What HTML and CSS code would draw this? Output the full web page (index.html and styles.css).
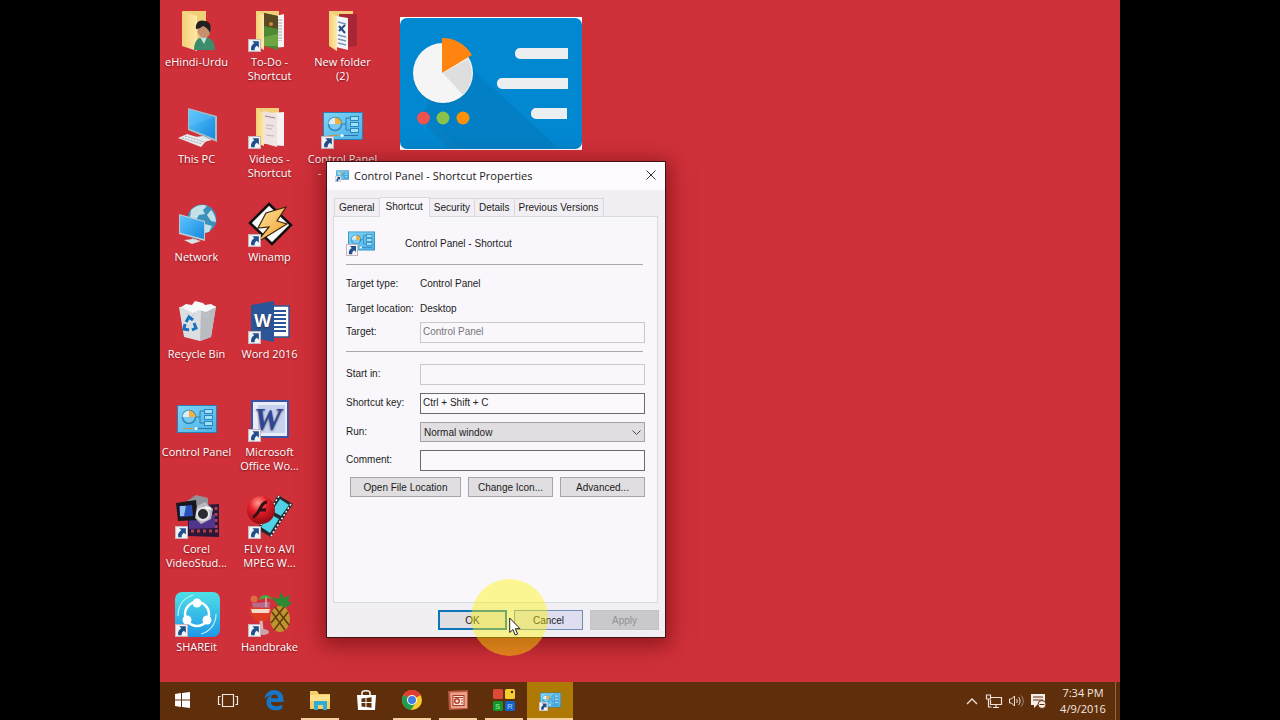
FILE: index.html
```html
<!DOCTYPE html>
<html lang="en">
<head>
<meta charset="utf-8">
<meta name="viewport" content="width=device-width, initial-scale=1">
<title>Control Panel - Shortcut Properties</title>
<link rel="stylesheet" href="styles.css">
</head>
<body>
<svg class="defs" aria-hidden="true">
  <defs>
    <linearGradient id="folderFront" x1="0" y1="0" x2="1" y2="0"><stop offset="0" stop-color="#f3cf74"/><stop offset="1" stop-color="#ffe9a8"/></linearGradient>
    <linearGradient id="screenBlue" x1="0" y1="0" x2="1" y2="1"><stop offset="0" stop-color="#5cc6fb"/><stop offset="1" stop-color="#1689e0"/></linearGradient>
    <linearGradient id="panelBlue" x1="0" y1="0" x2="1" y2="1"><stop offset="0" stop-color="#7fd3f7"/><stop offset="1" stop-color="#4cb2e6"/></linearGradient>
    <linearGradient id="shareBlue" x1="0" y1="0" x2="0" y2="1"><stop offset="0" stop-color="#4fe0e6"/><stop offset="1" stop-color="#1f97e8"/></linearGradient>
    <linearGradient id="bolt" x1="0" y1="0" x2="1" y2="1"><stop offset="0" stop-color="#ffe7a0"/><stop offset="1" stop-color="#f09a28"/></linearGradient>
    <radialGradient id="flash" cx=".4" cy=".25" r=".8"><stop offset="0" stop-color="#ff9a90"/><stop offset=".4" stop-color="#e5202a"/><stop offset="1" stop-color="#8c0610"/></radialGradient>
    <symbol id="arrow" viewBox="0 0 12 12">
      <rect width="12" height="12" fill="#f4f4f6"/><rect x=".5" y=".5" width="11" height="11" fill="none" stroke="#c9b5bb"/>
      <path d="M4 2h6v6L8.200 6.200C6.500 7.300 6 8.500 6.200 10.300H3C2.300 7.600 3.300 5.500 5.800 3.900z" fill="#1f4f8c"/>
    </symbol>
    <symbol id="cpanel" viewBox="0 0 40 28">
      <rect width="40" height="28" fill="#2a7fb5"/><rect x="1" y="1" width="38" height="26" fill="url(#panelBlue)"/>
      <circle cx="12" cy="12" r="6.500" fill="#7cc8ee" stroke="#2f86ba" stroke-width="1.500"/><path d="M12 12V5.500A6.500 6.500 0 0 1 18.500 12z" fill="#f3b13c"/><path d="M12 12V5.500A6.500 6.500 0 0 0 5.500 12z" fill="#d8effa"/>
      <path d="M19 12h4V6h4M23 12v6h4" fill="none" stroke="#2b7db0"/>
      <g fill="#9fe0fa" stroke="#2b86bb"><rect x="27.500" y="4.500" width="8" height="4"/><rect x="27.500" y="10.500" width="8" height="4"/><rect x="27.500" y="16.500" width="8" height="4"/></g>
      <path d="M6 23.500h10" stroke="#c29a45"/><path d="M21 23.500h14" stroke="#2878b0"/><circle cx="19" cy="23.500" r="1.500" fill="#fff"/>
    </symbol>
  </defs>
</svg>

<main class="screen">
  <section class="desktop">
    <div class="icons">
      <button class="icon"><svg viewBox="0 0 48 48"><path d="M10 4h23v35H10z" fill="#f0cf78"/><path d="M9 4l15 5v35L9 39z" fill="url(#folderFront)"/><path d="M21 43c0-9 4-13 10-13 7 0 11 5 11 13z" fill="#3c8d6b"/><path d="M27 30l4 7 3-7z" fill="#c9e4dc"/><ellipse cx="31" cy="23" rx="6.500" ry="8" fill="#c79170"/><path d="M23 22c-1-7 4-10 9-8 5 0 7 5 5 12-2-4-4-6-7-7-2 2-5 3-7 3z" fill="#222122"/></svg><span>eHindi-Urdu</span></button>
      <button class="icon"><svg viewBox="0 0 48 48"><path d="M10 4h23v35H10z" fill="#f0cf78"/><path d="M25 10l13-3v33l-13 1z" fill="#f5f3f2"/><path d="M33 12v22M35 12v22" stroke="#a9a6a8" stroke-dasharray="2 1"/><path d="M18 6l14 3v34l-14-4z" fill="#4d8a33"/><path d="M18 6l14 3v13l-14-3z" fill="#5a4a24"/><circle cx="25" cy="17" r="2" fill="#c88a3c"/><path d="M18 30l14-3v12l-14 0z" fill="#6fa444"/><path d="M10 4l8 4v35l-8-4z" fill="url(#folderFront)"/><use href="#arrow" x="2" y="32" width="13" height="13"/></svg><span>To-Do -<br>Shortcut</span></button>
      <button class="icon"><svg viewBox="0 0 48 48"><path d="M10 4h24v35H10z" fill="#f0cf78"/><path d="M20 7l18 0v32l-18 2z" fill="#a92735"/><path d="M17 9l12 2v32l-12-3z" fill="#f5f5f8"/><path d="M19 15l8 2M19 28l8 2M19 32l8 2M19 36l8 2" stroke="#7993ba" stroke-width="1.500"/><path d="M20 24l6-6M20 19l6 7" stroke="#264b83" stroke-width="2"/><path d="M10 4l8 6v34l-8-5z" fill="url(#folderFront)"/></svg><span>New folder<br>(2)</span></button>

      <button class="icon"><svg viewBox="0 0 48 48"><path d="M15 4l29 8v26L15 26z" fill="#a9bcc8"/><path d="M16 5.500l26 7.500v22L16 24.500z" fill="url(#screenBlue)"/><path d="M16 5.500l26 7.500-26 10z" fill="#6bcfff" opacity=".25"/><path d="M29 31l6 2v3l-7-2z" fill="#9aa8b0"/><path d="M22 33l8-1 9 4-8 2z" fill="#dfe5e8"/><path d="M5 34l9-4 20 6-6 7z" fill="#e8e9ec"/><path d="M9 34l20 6M12 32l19 6" stroke="#a8afb8" stroke-dasharray="2 1"/></svg><span>This PC</span></button>
      <button class="icon"><svg viewBox="0 0 48 48"><path d="M10 4h23v36H10z" fill="#f0cf78"/><path d="M24 9l14-1v34l-14-1z" fill="#f7f3f3"/><path d="M17 7l14 3v33l-14-4z" fill="#eee2e2"/><path d="M19 12l10 2" stroke="#a07a85"/><path d="M20 21l8 1M20 24l6 1M20 31l8 1" stroke="#c8b4bb"/><path d="M10 4l8 6v32l-8-3z" fill="url(#folderFront)"/><use href="#arrow" x="2" y="32" width="13" height="13"/></svg><span>Videos -<br>Shortcut</span></button>
      <button class="icon"><svg viewBox="0 0 48 48"><use href="#cpanel" x="4" y="8" width="40" height="28"/><use href="#arrow" x="2" y="32" width="13" height="13"/></svg><span>Control Panel</span><span class="rest">-</span></button>

      <button class="icon"><svg viewBox="0 0 48 48"><circle cx="29" cy="17" r="14.500" fill="#3b91bd"/><path d="M18 8c5-5 12-6 16-4l-4 4 2 4-6 1-3 5-6-3zM38 8c3 3 5 8 5 12l-5-1-4-6zM32 22l7 2-3 6-5 1z" fill="#c4e1e8"/><path d="M6 12l26 7v20L6 32z" fill="#bacbd5"/><path d="M7 13.500l24 6.500v17L7 30.500z" fill="url(#screenBlue)"/><path d="M19 36l5 1v2l-6-1z" fill="#8fa2ad"/><path d="M11 38l9-1 8 2-9 3z" fill="#d9e2e6"/></svg><span>Network</span></button>
      <button class="icon"><svg viewBox="0 0 48 48"><path d="M23 2L45 23 26 42 4 21z" fill="#fafafa" stroke="#111" stroke-width="2.500"/><path d="M40 5L20 11l-8 15 11-1-13 16 31-19-10-3z" fill="url(#bolt)" stroke="#3a2408" stroke-width="1.200"/><use href="#arrow" x="2" y="32" width="13" height="13"/></svg><span>Winamp</span></button>
      <i></i>

      <button class="icon"><svg viewBox="0 0 48 48"><path d="M6 8l37-1-5 31-11 4-16-4z" fill="#dcdfe2"/><path d="M28 9l15-2-5 31-11 4z" fill="#b9bdc2"/><path d="M8 8l5-3 6 1 3-4 8 2 2 2 6-1 5 3-10 5-7-2-6 3z" fill="#f7f8f9"/><path d="M14 14l3 5 5-5M29 14l5 4 3-5" stroke="#c3c7ca" fill="none"/><g fill="none" stroke="#1672bd" stroke-width="3"><path d="M13 23l3-5 4 3"/><path d="M21 24l2 5-4 2"/><path d="M16 31l-5-1 1-5"/></g></svg><span>Recycle Bin</span></button>
      <button class="icon"><svg viewBox="0 0 48 48"><path d="M25 7h18v31H25z" fill="#fff" stroke="#2a5699" stroke-width="1.500"/><path d="M28 12h12M28 16h12M28 20h12M28 24h12M28 28h12M28 32h12" stroke="#2a5699" stroke-width="2"/><path d="M5 6l23-4v41L5 38z" fill="#2a5699"/><text x="8" y="28" class="word-letter">W</text><use href="#arrow" x="2" y="32" width="13" height="13"/></svg><span>Word 2016</span></button>
      <i></i>

      <button class="icon"><svg viewBox="0 0 48 48"><use href="#cpanel" x="4" y="8" width="40" height="28"/></svg><span>Control Panel</span></button>
      <button class="icon"><svg viewBox="0 0 48 48"><rect x="6" y="4" width="36" height="36" fill="#e9edf8" stroke="#3a55a4" stroke-width="2"/><path d="M12 8h27v28H12z" fill="#c7d2ef"/><text x="8" y="33" class="office-letter">W</text><use href="#arrow" x="2" y="32" width="13" height="13"/></svg><span>Microsoft<br>Office Wo...</span></button>
      <i></i>

      <button class="icon"><svg viewBox="0 0 48 48"><path d="M15 12l31-2v33l-31-1z" fill="#2b1838"/><path d="M18 37h27M43 13v24" stroke="#b0414a" stroke-width="3" stroke-dasharray="3 3"/><path d="M16 26l26-6v14l-26 1z" fill="#51348c"/><path d="M14 7l9-6 12 3v7l-12 1z" fill="#929299"/><path d="M3 9l20-3 2 20-20 1z" fill="#17171c"/><path d="M6 12l13-1 1 11-13 1z" fill="#294fba"/><path d="M7 12l6 0-2 10H7z" fill="#94bdf1"/><path d="M24 12l8-4 8 7-2 10-10 5-6-6z" fill="#bbb9c0"/><circle cx="30" cy="20" r="6" fill="#2c2b33" stroke="#e6e5e8" stroke-width="2"/><path d="M32 13l6 2" stroke="#fff" stroke-width="2"/><use href="#arrow" x="2" y="32" width="13" height="13"/></svg><span>Corel<br>VideoStud...</span></button>
      <button class="icon"><svg viewBox="0 0 48 48"><path d="M32 1l15 9-22 33-14-8z" fill="#222a30"/><path d="M34 5l9 6-8 11-9-5zM24 20l9 5-9 14-9-6z" fill="#4fd2e5"/><path d="M33 2L13 34M45 10L25 42" stroke="#f0f0f0" stroke-width="1.500" stroke-dasharray="2 2"/><circle cx="15" cy="16" r="14" fill="url(#flash)"/><path d="M21 8c-7 0-7 13-14 15M12 16h8" fill="none" stroke="#321114" stroke-width="3"/><use href="#arrow" x="2" y="32" width="13" height="13"/></svg><span>FLV to AVI<br>MPEG W...</span></button>
      <i></i>

      <button class="icon"><svg viewBox="0 0 48 48"><rect x="2" y="0" width="45" height="45" rx="7" fill="url(#shareBlue)"/><circle cx="24" cy="22" r="12" fill="none" stroke="#fff" stroke-width="2.500"/><circle cx="24" cy="11" r="4.500" fill="#fff"/><circle cx="14" cy="28" r="4.500" fill="#fff"/><circle cx="34" cy="28" r="4.500" fill="#fff"/><path d="M5 24C5 13 11 6 20 3M43 22c0 11-7 18-15 20" fill="none" stroke="#b9f2f7" stroke-width="1.200"/><use href="#arrow" x="2" y="32" width="13" height="13"/></svg><span>SHAREit</span></button>
      <button class="icon"><svg viewBox="0 0 48 48"><path d="M35 16L25 5l8 2 2-7 3 6 6-3-2 6 4 2-8 6z" fill="#2c8a31"/><ellipse cx="34" cy="27" rx="10" ry="13" fill="#c0932f"/><path d="M26 20l13 18M29 15l14 18M42 20L28 38M38 15L25 31" stroke="#5c3d0b" stroke-width="1.500"/><path d="M6 11l18-1-1 7H7z" fill="#b76c8f"/><path d="M3 15l22 1c0 8-4 14-10 14S4 24 3 15z" fill="#df3d23"/><path d="M5 17h19l-1 4H6z" fill="#f5dcca"/><path d="M15 29l1 9" stroke="#ddb5bd" stroke-width="3"/><ellipse cx="17" cy="40" rx="6" ry="3" fill="#c9a3ab"/><path d="M13 8c1-6 9-7 13-1l-6-1z" fill="#45a83c"/><path d="M20 5v10" stroke="#eadccc"/><circle cx="8" cy="7" r="3.500" fill="#e06a45"/><use href="#arrow" x="2" y="32" width="13" height="13"/></svg><span>Handbrake</span></button>
    </div>

    <svg class="preview" viewBox="0 0 182 133" role="img" aria-label="Control Panel">
      <rect width="182" height="133" fill="#fff"/><rect y="1" width="182" height="131" rx="7" fill="#0288d1"/>
      <path d="M67 47l91 84H60L21 96z" fill="#027fc5"/><path d="M21 96l40 35H49L17 101z" fill="#0780c5"/>
      <circle cx="43" cy="58" r="30" fill="#0277b5" opacity=".5"/>
      <circle cx="43" cy="56" r="30" fill="#f5f5f5"/><path d="M43 56l25-14a30 30 0 0 1-5 36z" fill="#dedede"/><path d="M42 21a34 34 0 0 1 30 17L42 56z" fill="#ff8410"/>
      <path d="M168 31h-48a5 5 0 0 0-5 5v1a5 5 0 0 0 5 5h48zM168 61h-66a5 5 0 0 0-5 5v1a5 5 0 0 0 5 5h66zM167 91h-31a5 5 0 0 0-5 5v1a5 5 0 0 0 5 5h31z" fill="#eceff1"/>
      <circle cx="23.500" cy="101" r="6.500" fill="#ef5350"/><circle cx="43" cy="101" r="6.500" fill="#8bc34a"/><circle cx="63" cy="101" r="6.500" fill="#ff9108"/>
    </svg>

    <section class="dialog" role="dialog" aria-labelledby="dialog-title">
      <header class="titlebar">
        <svg class="title-icon" viewBox="0 0 14 13"><use href="#cpanel" x="1" y="1" width="13" height="10"/><use href="#arrow" y="7" width="6" height="6"/></svg>
        <h1 id="dialog-title">Control Panel - Shortcut Properties</h1>
        <button class="close" aria-label="Close"><svg viewBox="0 0 10 10"><path d="M.5.500l9 9M9.500.500l-9 9" stroke="#333" fill="none"/></svg></button>
      </header>
      <div class="tabs" role="tablist">
        <button role="tab">General</button><button role="tab" class="selected" aria-selected="true">Shortcut</button><button role="tab">Security</button><button role="tab">Details</button><button role="tab">Previous Versions</button>
      </div>
      <form class="panel" role="tabpanel">
        <div class="summary"><svg viewBox="0 0 30 28"><use href="#cpanel" x="2" y="2" width="27" height="20"/><use href="#arrow" y="15" width="12" height="12"/></svg><span>Control Panel - Shortcut</span></div>
        <hr>
        <dl class="facts">
          <dt>Target type:</dt><dd>Control Panel</dd>
          <dt>Target location:</dt><dd>Desktop</dd>
        </dl>
        <div class="field"><label for="target">Target:</label><input id="target" type="text" value="Control Panel" disabled></div>
        <hr class="second">
        <div class="fields">
          <div class="field"><label for="start">Start in:</label><input id="start" type="text" disabled></div>
          <div class="field"><label for="key">Shortcut key:</label><input id="key" type="text" value="Ctrl + Shift + C"></div>
          <div class="field"><label for="run">Run:</label><span class="pick"><select id="run"><option>Normal window</option><option>Minimized</option><option>Maximized</option></select><svg viewBox="0 0 9 5"><path d="M.5.500l4 4 4-4" fill="none" stroke="#444"/></svg></span></div>
          <div class="field"><label for="comment">Comment:</label><input id="comment" type="text"></div>
        </div>
        <div class="actions"><button type="button" class="btn wide">Open File Location</button><button type="button" class="btn">Change Icon...</button><button type="button" class="btn">Advanced...</button></div>
      </form>
      <footer class="footer"><button class="btn default">OK</button><button class="btn hover">Cancel</button><button class="btn" disabled>Apply</button></footer>
    </section>

    <div class="halo"></div>
    <svg class="cursor" viewBox="0 0 12 19"><path d="M.7 1v14.500l3.300-3 2.200 5.500 2.400-1-2.300-5.300h4.700z" fill="#fff" stroke="#222"/></svg>
  </section>

  <nav class="taskbar">
    <div class="apps">
      <button class="app start" aria-label="Start"><svg viewBox="0 0 24 24"><path d="M4 6l6-1v6.500H4zM11 5l8-1v7.500h-8zM4 12.500h6V19l-6-1zM11 12.500h8V20l-8-1z" fill="#fff"/></svg></button>
      <button class="app" aria-label="Task View"><svg viewBox="0 0 24 24"><path d="M6.500 6.500h11v12h-11zM4.500 8.500h-2v8h2M19.500 8.500h2v8h-2" fill="none" stroke="#f0e8e2" stroke-width="1.200"/></svg></button>
      <button class="app" aria-label="Edge"><svg viewBox="0 0 24 24"><path d="M2.500 11C3 5.500 7 2 12.200 2 18 2 21.500 6 21.500 11.200V14H8.800c.2 3 2.500 4.300 5.700 4.300 2.200 0 4-.6 5.700-1.500v4c-2 1-4.200 1.500-6.700 1.500C8 22.300 4.500 19 4.500 14.200c0-3.200 1.700-5.700 4.500-7-3 .6-5.200 1.900-6.500 3.800zM9 10.200h7c0-2.400-1.300-3.700-3.400-3.700-2 0-3.300 1.400-3.600 3.700z" fill="#1675c5"/></svg></button>
      <button class="app open" aria-label="File Explorer"><svg viewBox="0 0 24 24"><path d="M2 3h7l2 3h11v15H2z" fill="#f3cf6c"/><path d="M2 7h20v6H2z" fill="#ffe18c"/><path d="M6 13h13v9h-4v-5h-5v5H6z" fill="#31acd4"/></svg></button>
      <button class="app" aria-label="Store"><svg viewBox="0 0 24 24"><path d="M8 7V4.500C8 2 16 2 16 4.500V7" fill="none" stroke="#fff" stroke-width="1.500"/><path d="M3 7h19l-1 15H4z" fill="#fff"/><path d="M7.500 10.500l4-.5v4h-4zM12.500 10l5-.7V14h-5zM7.500 15h4v4l-4-.5zM12.500 15h5v4.700l-5-.6z" fill="#5f2e0b"/></svg></button>
      <button class="app open" aria-label="Chrome"><svg viewBox="0 0 24 24"><circle cx="12" cy="12" r="10" fill="#f7cb28"/><path d="M12 12L3.300 7A10 10 0 0 1 20.700 7z" fill="#df3e31"/><path d="M3.300 7A10 10 0 0 0 11 22l5-8-4-2z" fill="#219a50"/><path d="M3.300 7A10 10 0 0 1 20.700 7H12z" fill="#df3e31"/><circle cx="12" cy="12" r="5" fill="#fff"/><circle cx="12" cy="12" r="4" fill="#427fe0"/></svg></button>
      <button class="app open" aria-label="PowerPoint"><svg viewBox="0 0 24 24"><path d="M2 3l20-1v19l-19 1z" fill="#bb553e"/><path d="M4 4.500l17-.5v16L5 20.500z" fill="#e7a18d"/><rect x="7" y="7.500" width="11" height="10" fill="#fae2d9" stroke="#a63c27"/><circle cx="11" cy="13" r="2.300" fill="none" stroke="#b34029" stroke-width="1.500"/><path d="M8 9.500h9M15 12h2M15 15h2" stroke="#b34029"/></svg></button>
      <button class="app open" aria-label="Screen Recorder"><svg viewBox="0 0 24 24"><rect x="1" y="1" width="10" height="10" rx="1.500" fill="#dc4939"/><rect x="13" y="1" width="10" height="10" rx="1.500" fill="#f3cb33"/><rect x="1" y="13" width="10" height="10" rx="1.500" fill="#159329"/><rect x="13" y="13" width="10" height="10" rx="1.500" fill="#1262cc"/><circle cx="20" cy="4" r="1.200" fill="#332b10"/><text x="3" y="21" class="tile-letter green">S</text><text x="15" y="21" class="tile-letter">R</text></svg></button>
      <button class="app open active" aria-label="Control Panel"><svg viewBox="0 0 24 24"><use href="#cpanel" x="2" y="4" width="21" height="16"/><use href="#arrow" x="1" y="14" width="9" height="9"/></svg></button>
    </div>
    <div class="tray">
      <button aria-label="Show hidden icons"><svg viewBox="0 0 18 18"><path d="M4 12l5-5 5 5" fill="none" stroke="#eee2da" stroke-width="1.300"/></svg></button>
      <button aria-label="Network"><svg viewBox="0 0 18 18"><path d="M6 5.500h10.500v7H5.500V8M8 15.500h6M11 13v2" fill="none" stroke="#eee2da" stroke-width="1.200"/><path d="M1.500 3h4v4h-4zM3.500 7v8h3" fill="none" stroke="#eee2da" stroke-width="1.200"/></svg></button>
      <button aria-label="Volume"><svg viewBox="0 0 18 18"><path d="M2.500 7h2l3-3v10l-3-3h-2zM9.500 7c1 1 1 3 0 4M11.500 5c2 2 2 6 0 8" fill="none" stroke="#eee2da"/><path d="M14 3.500c3 3 3 8 0 11" fill="none" stroke="#a58b7a"/></svg></button>
      <button aria-label="Notifications"><svg viewBox="0 0 18 18"><path d="M2 2h14v11H8l-3 3v-3H2z" fill="#f5ede7"/><path d="M4 5h10M4 8h10" stroke="#5f2e0b"/><circle cx="13" cy="12.500" r="4" fill="#f5ede7" stroke="#5f2e0b"/><path d="M10.500 12.500h5" stroke="#5f2e0b"/></svg></button>
      <div class="clock"><time>7:34 PM</time><time>4/9/2016</time></div>
    </div>
  </nav>
</main>
</body>
</html>
```
FILE: styles.css
```css
* { box-sizing: border-box; }
body { margin: 0; background: #000; font-family: "Open Sans", "Noto Sans", sans-serif; font-size: 11px; }
button, input, select { font: inherit; color: inherit; margin: 0; padding: 0; border: 0; background: none; border-radius: 0; }
svg { display: block; flex: none; }
.defs { position: absolute; width: 0; height: 0; }

.screen { width: 75%; min-height: 100vh; margin: 0 auto; display: flex; flex-direction: column; background: #d0303a; }
.desktop { position: relative; flex: 1; display: flex; }

.icons { display: grid; grid-template-columns: repeat(3, 73px); grid-template-rows: repeat(7, 1fr); }
.icon { display: flex; flex-direction: column; align-items: center; padding-top: 7px; color: #fff; line-height: 14px; white-space: nowrap; text-shadow: 0 1px 2px rgba(60, 0, 0, .6); }
.icon svg { width: 48px; height: 48px; }
.icon .rest { padding-right: 46px; }
.word-letter { font: bold 18px "Open Sans", sans-serif; fill: #fff; }
.office-letter { font: italic bold 31px "Liberation Serif", serif; fill: #2c4796; }
.tile-letter { font: bold 8px "Liberation Sans", sans-serif; fill: #7fb4ff; }
.tile-letter.green { fill: #6fe07f; }

.preview { position: absolute; left: 240px; top: 17px; width: 182px; height: 133px; }

.dialog { position: absolute; left: 166px; top: 161px; width: 340px; border: 1px solid #3c1418; background: #f1eff3; color: #1c1c1c; font-family: "Liberation Sans", Arial, sans-serif; font-size: 10px; box-shadow: 0 4px 20px 4px rgba(80, 0, 0, .5); }
.titlebar { display: flex; align-items: center; height: 28px; padding: 0 9px 2px 8px; background: #fdfbfe; font-family: "Open Sans", "Noto Sans", sans-serif; }
.title-icon { width: 14px; height: 13px; }
.titlebar h1 { flex: 1; margin: 0 0 0 5px; font-size: 11px; font-weight: 400; }
.close svg { width: 10px; height: 10px; }

.tabs { display: flex; align-items: flex-end; padding: 7px 7px 0; }
.tabs button { height: 18px; padding: 0 4px; border: 1px solid #d9d8dc; border-bottom: 0; }
.tabs button + button { border-left: 0; }
.tabs .selected { height: 20px; margin-bottom: -1px; padding: 0 6px 3px; position: relative; background: #f9f7fb; }

.panel { min-height: 387px; margin: 0 7px 0 6px; padding: 0 12px; border: 1px solid #d6dbdc; background: #f9f7fb; }
.panel hr { height: 1px; margin: 0 2px 0 0; border: 0; background: #a9a8ab; }
.summary { display: flex; align-items: center; gap: 29px; padding: 12px 0 7px; }
.summary svg { width: 30px; height: 28px; }
.facts { display: grid; grid-template-columns: 74px 1fr; margin: 6px 0 1px; line-height: 25px; }
.facts dd { margin: 0; }
.field { display: grid; grid-template-columns: 74px 1fr; line-height: 20px; }
.field input { width: 100%; height: 21px; padding: 0 2px 2px; border: 1px solid #6b6a6e; background: #fbf9fc; }
.field input:disabled { border-color: #c9c8cc; color: #77767a; background: #f9f7fb; }
.panel .second { margin-top: 8px; }
.fields { display: grid; gap: 8px; margin-top: 12px; }
.pick { position: relative; display: block; }
.pick select { display: block; appearance: none; width: 100%; height: 20px; padding: 0 3px; border: 1px solid #a4a3a7; background: #e0dee1; }
.pick svg { position: absolute; right: 4px; top: 8px; width: 9px; height: 5px; pointer-events: none; }
.actions { display: flex; gap: 7px; margin: 6px 0 0 4px; }
.btn { height: 20px; border: 1px solid #a6a5a9; background: #e0dee1; }
.actions .btn { flex: 1; }
.actions .wide { flex: 0 0 111px; }

.footer { display: flex; justify-content: flex-end; gap: 7px; padding: 7px 6px; }
.footer .btn { width: 69px; }
.footer .default { border: 2px solid #0f76ba; }
.footer .hover { border-color: #6f8fb8; background: #dfddf0; }
.footer .btn:disabled { border-color: #c4c4c4; background: #c9c8ca; color: #929194; }

.halo { position: absolute; left: 311px; top: 579px; width: 77px; height: 77px; border-radius: 50%; background: rgba(255, 244, 0, .42); }
.cursor { position: absolute; left: 349px; top: 617px; width: 12px; height: 19px; }

.taskbar { display: flex; justify-content: space-between; height: 38px; background: #5f2e0b; }
.apps, .tray { display: flex; }
.app { display: flex; align-items: center; justify-content: center; width: 46px; border-bottom: 2px solid transparent; position: relative; }
.app.start { width: 45px; }
.app svg { width: 24px; height: 24px; }
.app.open::after { content: ""; position: absolute; left: 4px; right: 4px; bottom: -2px; height: 2px; background: #f8cfa0; }
.app.active { background: #ae7905; }
.app.active::after { left: 0; right: 0; }
.tray { align-items: center; gap: 4px; padding-right: 4px; color: #f3e8e0; }
.tray svg { width: 18px; height: 18px; }
.clock { display: flex; flex-direction: column; align-items: center; justify-content: center; width: 65px; height: 38px; border-right: 1px solid #8a6a52; line-height: 16px; }
```
